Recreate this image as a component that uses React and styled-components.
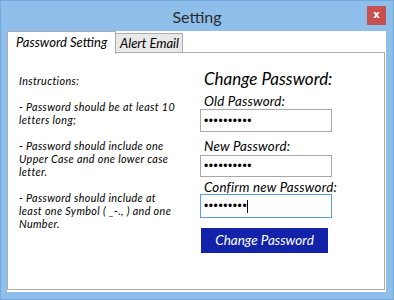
import React from 'react'
import styled, { createGlobalStyle } from 'styled-components'

const GlobalStyle = createGlobalStyle`
	html, body {
		margin: 0;
		padding: 0;
		background: #8ebfeb;
	}
	* {
		box-sizing: border-box;
	}
`

const frameBlue = '#8ebfeb'
const lineGray = '#acacac'
const uiFont = `Lato, "Open Sans", sans-serif`

const Window = styled.div`
	width: 394px;
	height: 300px;
	background: ${frameBlue};
	border: 1px solid #75a8dc;
	display: flex;
	flex-direction: column;
	font-family: ${uiFont};
	color: #000;
	overflow: hidden;
`

const TitleBar = styled.div`
	height: 30px;
	display: grid;
	grid-template-columns: 1fr auto 1fr;
	align-items: center;
`

const Title = styled.div`
	grid-column: 2;
	font-size: 16px;
	color: #2b2b2b;
	padding-top: 1px;
`

const CloseButton = styled.div`
	grid-column: 3;
	justify-self: end;
	align-self: start;
	margin-top: 5px;
	margin-right: 7px;
	width: 19px;
	height: 19px;
	background: #c75050;
	color: #fff;
	font-family: "DejaVu Sans", sans-serif;
	font-weight: bold;
	font-size: 10px;
	line-height: 18px;
	text-align: center;
`

const Client = styled.div`
	margin-left: 6px;
	width: 379px;
	height: 261px;
	background: #fff;
	display: flex;
	flex-direction: column;
`

const TabStrip = styled.div`
	height: 22px;
	display: flex;
	align-items: flex-end;
`

const Tab = styled.div`
	position: relative;
	z-index: ${p => (p.$active ? 1 : 0)};
	height: ${p => (p.$active ? '23px' : '20px')};
	margin-bottom: ${p => (p.$active ? '-1px' : '0')};
	width: ${p => p.$width}px;
	margin-left: ${p => (p.$active ? '0' : '-1px')};
	padding-left: ${p => p.$pad}px;
	border: 1px solid ${lineGray};
	border-bottom: ${p => (p.$active ? 'none' : `1px solid ${lineGray}`)};
	background: ${p => (p.$active ? '#fff' : '#e9e9e9')};
	font-style: italic;
	font-size: 13px;
	line-height: ${p => (p.$active ? '20px' : '19px')};
	white-space: nowrap;
`

const Panel = styled.div`
	width: 378px;
	height: 238px;
	border: 1px solid ${lineGray};
	margin-top: -1px;
	display: flex;
`

const Instructions = styled.div`
	width: 192px;
	padding: 21px 0 0 11px;
	font-style: italic;
	font-size: 10.8px;
	letter-spacing: 0.35px;
	line-height: 13px;
	white-space: nowrap;
`

const Para = styled.p`
	margin: 0 0 13px;
`

const Form = styled.div`
	display: flex;
	flex-direction: column;
	align-items: flex-start;
	padding-top: 16px;
	font-style: italic;
`

const Heading = styled.div`
	font-size: 17px;
	line-height: 20px;
	padding-left: 4px;
`

const FieldLabel = styled.div`
	font-size: 13.3px;
	letter-spacing: 0.2px;
	line-height: 16px;
	padding-left: 4px;
	margin-top: ${p => p.$gap}px;
`

const PasswordBox = styled.div`
	width: 132px;
	height: ${p => p.$h}px;
	margin-top: ${p => p.$gap}px;
	border: 1px solid ${p => (p.$focused ? '#5a9ee0' : '#a9a9a9')};
	padding-left: 3px;
	display: flex;
	align-items: center;
	font-family: "Liberation Sans", sans-serif;
	font-style: normal;
	font-size: 12px;
	letter-spacing: 0.6px;
`

const Caret = styled.span`
	display: inline-block;
	width: 1px;
	height: 13px;
	background: #000;
`

const SubmitButton = styled.div`
	width: 127px;
	height: 25px;
	margin-top: 10px;
	margin-left: 1px;
	background: #1223a9;
	color: #fff;
	font-size: 13.5px;
	line-height: 25px;
	text-align: center;
`

const dots = n => '•'.repeat(n)

const App = () => {
	return (
		<>
			<GlobalStyle />
			<Window>
				<TitleBar>
					<Title>Setting</Title>
					<CloseButton>x</CloseButton>
				</TitleBar>
				<Client>
					<TabStrip>
						<Tab $active $width={109} $pad={8}>Password Setting</Tab>
						<Tab $width={68} $pad={4}>Alert Email</Tab>
					</TabStrip>
					<Panel>
						<Instructions>
							<Para>Instructions:</Para>
							<Para>- Password should be at least 10<br />letters long;</Para>
							<Para>- Password should include one<br />Upper Case and one lower case<br />letter.</Para>
							<Para>- Password should include at<br />least one Symbol ( _-., ) and one<br />Number.</Para>
						</Instructions>
						<Form>
							<Heading>Change Password:</Heading>
							<FieldLabel $gap={4}>Old Password:</FieldLabel>
							<PasswordBox $h={23} $gap={0}>{dots(10)}</PasswordBox>
							<FieldLabel $gap={6}>New Password:</FieldLabel>
							<PasswordBox $h={22} $gap={1}>{dots(10)}</PasswordBox>
							<FieldLabel $gap={2}>Confirm new Password:</FieldLabel>
							<PasswordBox $h={24} $gap={-1} $focused>{dots(9)}<Caret /></PasswordBox>
							<SubmitButton>Change Password</SubmitButton>
						</Form>
					</Panel>
				</Client>
			</Window>
		</>
	)
}

export default App
